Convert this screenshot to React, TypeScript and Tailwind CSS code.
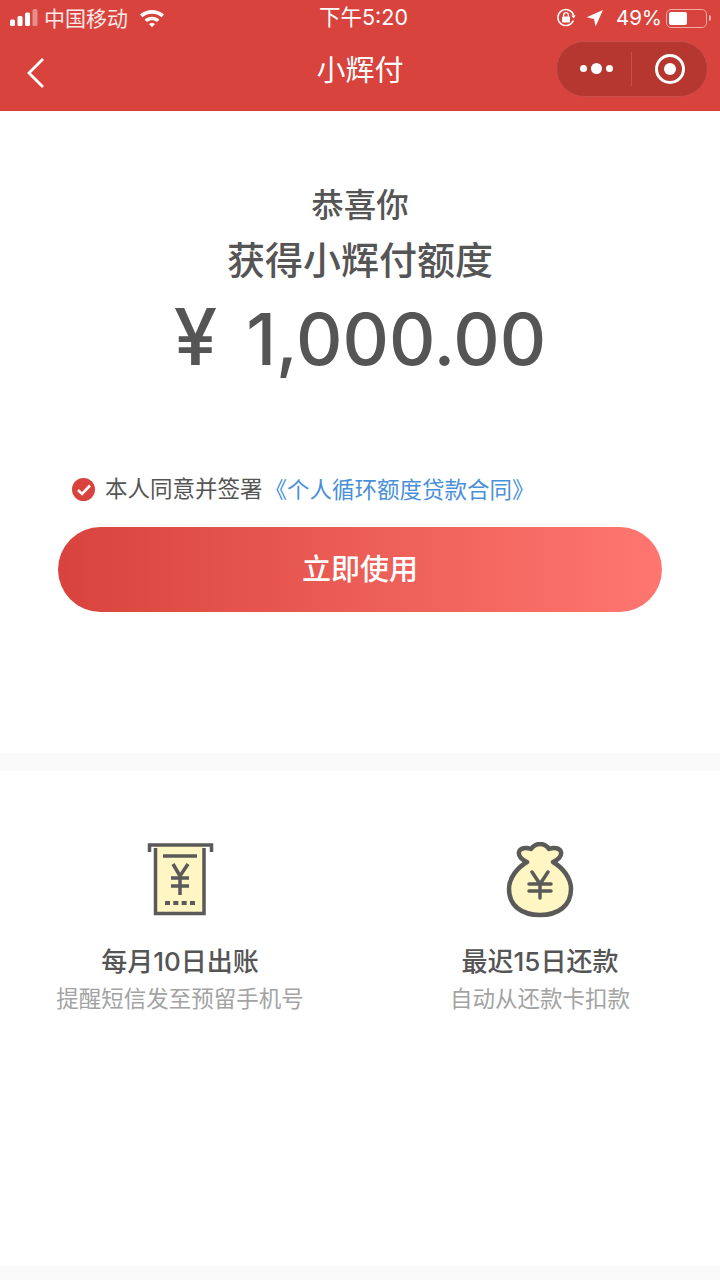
const cjk = "font-['Inter','Noto_Sans_CJK_SC',sans-serif]"

const SignalBars = () => (
  <svg width="30" height="20" viewBox="0 0 30 20" className="block">
    <rect x="0" y="11.5" width="5" height="6.5" rx="1.5" fill="#fff" />
    <rect x="7.5" y="8" width="5" height="10" rx="1.5" fill="#fff" />
    <rect x="15" y="4.5" width="5" height="13.5" rx="1.5" fill="#fff" />
    <rect x="22.5" y="1" width="5" height="17" rx="1.5" fill="#fff" fillOpacity="0.4" />
  </svg>
)

const Wifi = () => (
  <svg width="26" height="20" viewBox="0 0 26 20" className="block">
    <path d="M1 6.5C7.8 0.5 18.2 0.5 25 6.5L22.6 9.2C17 4.6 9 4.6 3.4 9.2Z" fill="#fff" />
    <path d="M5.6 11.4C9.8 7.8 16.2 7.8 20.4 11.4L18.1 14C15.1 11.6 10.9 11.6 7.9 14Z" fill="#fff" />
    <path d="M10 16C11.8 14.6 14.2 14.6 16 16L13 19.2Z" fill="#fff" />
  </svg>
)

const RotationLock = () => (
  <svg width="20" height="20" viewBox="0 0 20 20" fill="none" className="block">
    <path d="M17.4 12.5A8 8 0 1 1 17.6 7.2" stroke="#fff" strokeWidth="1.5" />
    <path d="M15.2 7.4L19.6 7.2L17.8 10.6Z" fill="#fff" />
    <rect x="6" y="8.6" width="8" height="6" rx="1" fill="#fff" />
    <path d="M7.6 8.8V7a2.4 2.4 0 0 1 4.8 0v1.8" stroke="#fff" strokeWidth="1.3" />
  </svg>
)

const LocationArrow = () => (
  <svg width="18" height="18" viewBox="0 0 18 18" className="block">
    <path d="M17 1L9.6 17.4L8 10L0.6 8.2Z" fill="#fff" />
  </svg>
)

const Battery = () => (
  <div className="flex items-center">
    <div className="w-[41px] h-[19px] rounded-[5px] border border-[#f0a9a5] p-[2px]">
      <div className="w-[18px] h-full rounded-[2px] bg-white" />
    </div>
    <div className="ml-[2px] w-[2px] h-[6px] rounded-r bg-[#f0a9a5]" />
  </div>
)

const BackArrow = () => (
  <svg width="20" height="32" viewBox="0 0 20 32" fill="none" className="block">
    <path d="M17 2L3 16L17 30" stroke="#fff" strokeWidth="2.8" />
  </svg>
)

const Capsule = () => (
  <div className="flex items-center w-[152px] h-[56px] mb-[2px] rounded-full bg-[#b53730] border border-[#c9504a]">
    <div className="flex-1 flex items-center justify-center gap-[4px] ml-[4px]">
      <span className="w-[7px] h-[7px] rounded-full bg-white" />
      <span className="w-[11px] h-[11px] rounded-full bg-white" />
      <span className="w-[7px] h-[7px] rounded-full bg-white" />
    </div>
    <div className="w-px h-[34px] bg-[#c9504a]" />
    <div className="w-[75px] flex items-center justify-center">
      <div className="w-[30px] h-[30px] rounded-full border-[3px] border-white flex items-center justify-center">
        <div className="w-[12px] h-[12px] rounded-full bg-white" />
      </div>
    </div>
  </div>
)

const ReceiptIcon = () => (
  <svg width="68" height="76" viewBox="0 0 68 76" fill="none" className="block">
    <path d="M9 4H58V72H9Z" fill="#fff6c4" />
    <path d="M3.5 10V3H65.5V10" stroke="#5a5a58" strokeWidth="3.5" />
    <path d="M9.5 6V71.5H58V6" stroke="#5a5a58" strokeWidth="3.5" />
    <path d="M17 14H51" stroke="#5a5a58" strokeWidth="3.5" />
    <path d="M27 22L34 34L42 22M34 34V53M25 36H43M25 44H43" stroke="#5a5a58" strokeWidth="3.5" />
    <path d="M19 61H49" stroke="#5a5a58" strokeWidth="4" strokeDasharray="5 3.33" />
  </svg>
)

const BagIcon = () => (
  <svg width="68" height="76" viewBox="0 0 68 76" fill="none" className="block">
    <path
      d="M21 20C16 18 12 14 13 10C14 6 20 5 25 7C28 3 31 2 34 2C38 2 41 4 43 7C48 5 54 6 55 10C56 14 52 18 47 20C57 26 65 36 65 47C65 64 52 73 34 73C16 73 3 64 3 47C3 36 11 26 21 20Z"
      fill="#fff6c4"
      stroke="#5a5a58"
      strokeWidth="4.5"
      strokeLinejoin="round"
    />
    <path d="M26 30L34 42L42 30M34 42V56M23 42H45M23 49H45" stroke="#5a5a58" strokeWidth="3.5" strokeLinecap="round" />
  </svg>
)

const features = [
  { icon: ReceiptIcon, title: '每月10日出账', desc: '提醒短信发至预留手机号' },
  { icon: BagIcon, title: '最迟15日还款', desc: '自动从还款卡扣款' },
]

export default function App() {
  return (
    <div className={`h-[1280px] flex flex-col bg-white overflow-hidden ${cjk}`}>
      {/* status bar + nav */}
      <div className="h-[111px] bg-[#d8433d] text-white shrink-0">
        <div className="h-[36px] flex items-center justify-between pl-[10px] pr-[9px]">
          <div className="w-[300px] flex items-center">
            <SignalBars />
            <span className="ml-[4px] text-[21px] leading-none text-[#fde9e8]">中国移动</span>
            <span className="ml-[11px]"><Wifi /></span>
          </div>
          <span className="ml-[9px] text-[21.5px] leading-none">下午5:20</span>
          <div className="flex-1 flex items-center justify-end">
            <RotationLock />
            <span className="ml-[10px]"><LocationArrow /></span>
            <span className="ml-[12px] text-[20.5px] leading-none">49%</span>
            <span className="ml-[4px]"><Battery /></span>
          </div>
        </div>
        <div className="h-[67px] flex items-center pl-[12px] pr-[12px]">
          <div className="flex-1 pt-[7px]">
            <div className="ml-[14px]">
              <BackArrow />
            </div>
          </div>
          <span className="pt-[2px] text-[29px] leading-none">小辉付</span>
          <div className="flex-1 flex justify-end">
            <Capsule />
          </div>
        </div>
      </div>

      {/* amount */}
      <div className="h-[642px] shrink-0 flex flex-col items-center text-[#555555]">
        <p className="mt-[75px] text-[32.5px] leading-[40px] font-medium">恭喜你</p>
        <p className="mt-[11px] text-[38px] leading-[46px] font-medium">获得小辉付额度</p>
        <p className="mt-[9px] text-[78px] leading-[90px] font-medium whitespace-pre">
          <span>¥</span>
          <span className="ml-[29px] text-[72px]">1,000.00</span>
        </p>

        <div className="mt-[89px] self-stretch pl-[72px] flex items-center">
          <svg width="23" height="23" viewBox="0 0 23 23" className="block">
            <circle cx="11.5" cy="11.5" r="11.5" fill="#d8433d" />
            <path d="M6 12L10 16L18 7.5" stroke="#fff" strokeWidth="2.6" fill="none" />
          </svg>
          <span className="ml-[10px] text-[22.5px] leading-[30px]">本人同意并签署</span>
          <span className="ml-[2px] mt-[2px] text-[22.5px] leading-[30px] text-[#4a90d9]">《个人循环额度贷款合同》</span>
        </div>

        <div className="mt-[22px] w-[604px] h-[85px] rounded-full bg-gradient-to-r from-[#d8433d] to-[#ff7670] flex items-center justify-center text-white text-[29px] font-medium">
          立即使用
        </div>
      </div>

      <div className="h-[18px] shrink-0 bg-[#fafafa]" />

      {/* features */}
      <div className="flex-1 grid grid-cols-2 content-start pt-[71px]">
        {features.map((item, index) => {
          const Icon = item.icon
          return (
            <div key={index} className="flex flex-col items-center">
              <Icon />
              <p className="mt-[27px] text-[26px] leading-[34px] font-medium text-[#555555]">{item.title}</p>
              <p className="mt-[5px] text-[22.5px] leading-[30px] text-[#a3a3a3]">{item.desc}</p>
            </div>
          )
        })}
      </div>

      <div className="h-[14px] shrink-0 bg-[#fafafa]" />
    </div>
  )
}
